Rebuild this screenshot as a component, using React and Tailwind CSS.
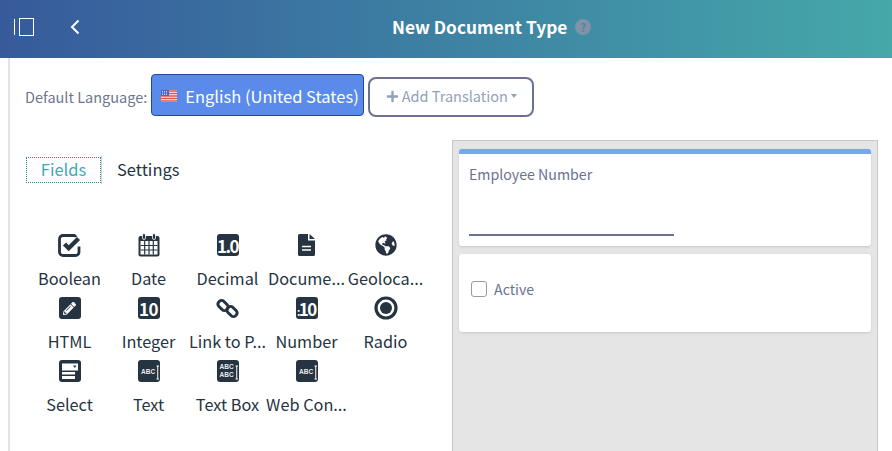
import React from "react";
import { FaGlobeAmericas, FaPencilAlt, FaPlus } from "react-icons/fa";

const DARK = "#263442";

function Tile({ children }) {
  return (
    <div className="flex h-[22px] w-[22px] items-center justify-center overflow-hidden rounded-[3px] bg-[#263442] font-bold leading-none text-white">
      {children}
    </div>
  );
}

function CheckIcon() {
  return (
    <svg width="23" height="23" viewBox="0 0 23 23" fill="none" stroke={DARK}>
      <path d="M18 3A3 3 0 0 0 16.5 1.5H5A3.5 3.5 0 0 0 1.5 5V18A3.5 3.5 0 0 0 5 21.5h12.5A3.5 3.5 0 0 0 21 18v-5.5" strokeWidth="2.8" />
      <path d="M6.5 10l4.2 4.2L20.5 4.5" strokeWidth="4.4" />
    </svg>
  );
}

function CalendarIcon() {
  return (
    <svg width="22" height="24" viewBox="0 0 22 24" fill="none">
      <rect x="0.5" y="3" width="21" height="20.5" rx="2" fill={DARK} />
      <rect x="4.5" y="0.5" width="3" height="6" rx="1.5" fill={DARK} stroke="#fff" strokeWidth="0.8" />
      <rect x="14.5" y="0.5" width="3" height="6" rx="1.5" fill={DARK} stroke="#fff" strokeWidth="0.8" />
      <rect x="2.5" y="8" width="17" height="13.5" fill="#fff" />
      <path d="M2.5 12.5h17M2.5 17h17M6.7 8v13.5M11 8v13.5M15.3 8v13.5" stroke={DARK} strokeWidth="1.2" />
    </svg>
  );
}

function DocIcon() {
  return (
    <svg width="17" height="22" viewBox="0 0 17 22">
      <path d="M1.5 0H10v6.5h7V20.5a1.5 1.5 0 0 1-1.5 1.5H1.5A1.5 1.5 0 0 1 0 20.5V1.5A1.5 1.5 0 0 1 1.5 0zM11.5 0 17 5h-5.5z" fill={DARK} />
      <path d="M4 12.5h9M4 16h9" stroke="#fff" strokeWidth="1.6" />
    </svg>
  );
}

function LinkIcon() {
  return (
    <svg width="23" height="23" viewBox="0 0 23 23" fill="none" stroke={DARK} strokeWidth="3">
      <rect x="1.5" y="5" width="11" height="7" rx="3" transform="rotate(45 7 8.5)" />
      <rect x="10.5" y="11" width="11" height="7" rx="3" transform="rotate(45 16 14.5)" />
    </svg>
  );
}

function RadioIcon() {
  return (
    <svg width="24" height="24" viewBox="0 0 24 24" fill="none">
      <circle cx="12" cy="12" r="10" stroke={DARK} strokeWidth="3.2" />
      <circle cx="12" cy="12" r="6" fill={DARK} />
    </svg>
  );
}

function SelectIcon() {
  return (
    <Tile>
      <svg width="22" height="22" viewBox="0 0 22 22">
        <path d="M3 3.5h16v7H3zM3 12h13v2.5H3zM3 16h13v3H3z" fill="#fff" />
        <path d="M14 5.5h3.5l-1.75 2.5z" fill={DARK} />
      </svg>
    </Tile>
  );
}

function AbcIcon({ lines = 1 }) {
  return (
    <Tile>
      <svg width="22" height="22" viewBox="0 0 22 22" fill="#e8ebee">
        {lines === 1 ? (
          <text x="3" y="14" fontSize="6.5" fontWeight="700" fontFamily="Liberation Sans, sans-serif">ABC</text>
        ) : (
          <>
            <text x="2.5" y="8.5" fontSize="6.5" fontWeight="700" fontFamily="Liberation Sans, sans-serif">ABC</text>
            <text x="2.5" y="16.5" fontSize="6.5" fontWeight="700" fontFamily="Liberation Sans, sans-serif">ABC</text>
          </>
        )}
        <path d="M18.5 6h2.5M18.5 19h2.5M19.75 6v13" stroke="#fff" strokeWidth="1" fill="none" />
      </svg>
    </Tile>
  );
}

const fields = [
  { label: "Boolean", icon: <CheckIcon /> },
  { label: "Date", icon: <CalendarIcon /> },
  { label: "Decimal", icon: <Tile><span className="text-[17px] tracking-[-1.5px]">1.0</span></Tile> },
  { label: "Docume...", icon: <DocIcon /> },
  { label: "Geoloca...", icon: <FaGlobeAmericas size={22} color={DARK} /> },
  { label: "HTML", icon: <Tile><FaPencilAlt size={13} /></Tile> },
  { label: "Integer", icon: <Tile><span className="text-[17px] tracking-[-0.5px]">10</span></Tile> },
  { label: "Link to P...", icon: <LinkIcon /> },
  { label: "Number", icon: <Tile><span className="text-[17px] tracking-[-1.5px]"><span className="text-[10px]">:</span>10</span></Tile> },
  { label: "Radio", icon: <RadioIcon /> },
  { label: "Select", icon: <SelectIcon /> },
  { label: "Text", icon: <AbcIcon /> },
  { label: "Text Box", icon: <AbcIcon lines={2} /> },
  { label: "Web Con...", icon: <AbcIcon /> },
];

function SidebarToggle() {
  return (
    <svg width="22" height="18" viewBox="0 0 22 18" fill="none" stroke="#fff" strokeWidth="1">
      <path d="M1.5 1v16" />
      <rect x="6.5" y="0.5" width="14" height="17" />
    </svg>
  );
}

function BackChevron() {
  return (
    <svg width="10" height="16" viewBox="0 0 10 16" fill="none" stroke="#fff" strokeWidth="2">
      <path d="M8.5 1.5 2 8l6.5 6.5" />
    </svg>
  );
}

function UsFlag() {
  return (
    <svg width="16" height="12" viewBox="0 0 16 12">
      <rect width="16" height="12" fill="#f5f5f5" />
      <path d="M0 1h16M0 3.5h16M0 6h16M0 8.5h16M0 11h16" stroke="#e2574c" strokeWidth="1.3" />
      <rect width="8" height="6" fill="#4a66c8" />
      <path d="M1 1.5h6M1 3h6M1 4.5h6" stroke="#fff" strokeWidth="0.7" strokeDasharray="1 1" />
    </svg>
  );
}

export default function App() {
  return (
    <div className="h-[451px] w-[892px] overflow-hidden bg-white font-['Noto_Sans_CJK_SC',sans-serif] text-[#263442]">
      <header className="flex h-[58px] items-center bg-gradient-to-r from-[#375a9b] to-[#45a8a9] pb-[4px] pl-[13px]">
        <SidebarToggle />
        <div className="ml-[35px]"><BackChevron /></div>
        <div className="ml-[312px] flex items-center gap-2">
          <span className="text-[17.3px] font-bold leading-6 text-white">New Document Type</span>
          <span className="flex h-4 w-4 items-center justify-center rounded-full bg-[#7f93a8] text-[11px] font-bold leading-none text-[#5d7f9b]">?</span>
        </div>
      </header>

      <div className="ml-2 h-[393px] border-l-2 border-[#e3e3e3] pl-[15px]">
        <div className="flex items-center pt-4">
          <span className="pt-[3px] text-[14.5px] leading-6 text-[#6b7690]">Default Language:</span>
          <button className="ml-1 flex h-[42px] w-[213px] items-center gap-2 whitespace-nowrap rounded-[4px] border border-[#24479c] bg-[#5a8bea] pl-[9px] pt-[1px] text-[16.5px] leading-6 text-white">
            <UsFlag />
            English (United States)
          </button>
          <button className="-mb-[1px] ml-1 mt-[3px] flex h-[40px] w-[166px] items-center justify-center gap-[3px] whitespace-nowrap rounded-[8px] border-2 border-[#6b7290] pb-[2px] text-[14.5px] leading-6 text-[#8fa3b8]">
            <FaPlus size={13} />
            Add Translation
            <span className="h-0 w-0 border-x-[3.5px] border-t-[4px] border-x-transparent border-t-[#8fa3b8]" />
          </button>
        </div>

        <div className="mt-[24px] flex">
          <div className="w-[427px] pt-[16px]">
            <div className="flex h-[27px] items-center pl-[1px]">
              <div className="h-[28px] border-r border-[#d0d0d0] pt-[1px]">
                <div className="flex h-[26px] w-[75px] items-center justify-center border border-dotted border-[#2f8f98] pb-[2px] text-[16.5px] leading-6 text-[#45a8b5]">Fields</div>
              </div>
              <div className="ml-[15px] pb-[2px] text-[16.5px] leading-6">Settings</div>
            </div>
            <div className="ml-[5px] mt-[49px] grid w-[395px] grid-cols-5">
              {fields.map((f) => (
                <div key={f.label} className="flex h-[63px] flex-col items-center">
                  <div className="flex h-[26px] items-center justify-center">{f.icon}</div>
                  <div className="mt-[8px] whitespace-nowrap text-[16.3px] leading-6">{f.label}</div>
                </div>
              ))}
            </div>
          </div>
          <div className="h-[320px] w-[426px] border border-[#c8c8c8] bg-[#e5e5e5] px-[6px] pt-[8px]">
            <div className="h-[97px] rounded-[3px] border-t-[5px] border-[#77a6f7] bg-white pl-[10px] pt-[8px] shadow-sm">
              <div className="text-[14.2px] leading-6 text-[#6b7290]">Employee Number</div>
              <div className="mt-[48px] h-[2px] w-[205px] bg-[#6b7290]" />
            </div>
            <div className="mt-2 flex h-[78px] items-center rounded-[3px] bg-white pb-2 pl-3 shadow-sm">
              <span className="h-4 w-4 rounded-[3px] border border-[#9a9a9a] bg-white" />
              <span className="ml-[7px] text-[14.2px] leading-6 text-[#6b7290]">Active</span>
            </div>
          </div>
        </div>
      </div>
    </div>
  );
}
